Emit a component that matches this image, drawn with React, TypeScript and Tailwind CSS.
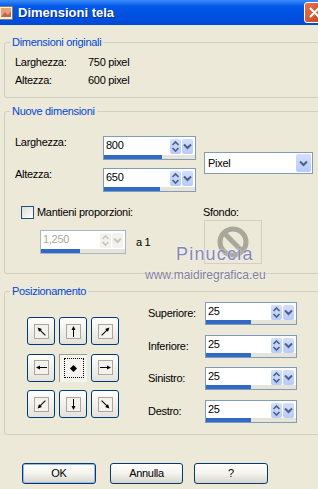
import React from "react";

type Dir = "nw" | "n" | "ne" | "w" | "e" | "sw" | "s" | "se";

const rotation: Record<Dir, string> = {
  nw: "-rotate-45",
  n: "rotate-0",
  ne: "rotate-45",
  w: "-rotate-90",
  e: "rotate-90",
  sw: "-rotate-135",
  s: "rotate-180",
  se: "rotate-135",
};

const Group: React.FC<{ title: string; className: string; children: React.ReactNode }> = ({
  title,
  className,
  children,
}) => (
  <div className={`relative -mr-[12px] rounded-[3px] border border-[#D0D0BF] ${className}`}>
    <span className="absolute -top-[7px] left-[5px] bg-[#ECE9D8] px-[2px] leading-[13px] text-[#0046D5]">
      {title}
    </span>
    {children}
  </div>
);

const SpinBox: React.FC<{ value: string; fill: number; size: string; disabled?: boolean }> = ({
  value,
  fill,
  size,
  disabled,
}) => (
  <div
    className={`flex flex-col border bg-white ${size} ${
      disabled ? "border-[#A7B6C8]" : "border-[#7F9DB9]"
    }`}
  >
    <div className="flex flex-1">
      <span className={`flex-1 pl-[2px] pt-[2px] leading-[13px] ${disabled ? "text-[#ACA899]" : "text-black"}`}>
        {value}
      </span>
      <div className="mr-[2px] mt-[2px] flex h-[15px] gap-[1px]">
        <div
          className={`flex w-[11px] items-center justify-center rounded-[2px] ${
            disabled ? "bg-[#F3F2EC]" : "bg-linear-to-b from-[#D3DFFD] to-[#B7CBF8]"
          }`}
        >
          <svg width="11" height="15" viewBox="0 0 11 15">
            <polyline
              points="2.5,6 5.5,3 8.5,6"
              fill="none"
              stroke={disabled ? "#C9C7BA" : "#4D6185"}
              strokeWidth="1.6"
            />
            <polyline
              points="2.5,9 5.5,12 8.5,9"
              fill="none"
              stroke={disabled ? "#C9C7BA" : "#4D6185"}
              strokeWidth="1.6"
            />
          </svg>
        </div>
        <div
          className={`flex w-[11px] items-center justify-center rounded-[2px] ${
            disabled ? "bg-[#F3F2EC]" : "bg-linear-to-b from-[#D3DFFD] to-[#B7CBF8]"
          }`}
        >
          <svg width="11" height="15" viewBox="0 0 11 15">
            <polyline
              points="2,5.5 5.5,9 9,5.5"
              fill="none"
              stroke={disabled ? "#C9C7BA" : "#4D6185"}
              strokeWidth="2"
            />
          </svg>
        </div>
      </div>
    </div>
    <div className="h-[4px] bg-[#E6E4D9]">
      <div className="h-full bg-[#316AC5]" style={{ width: fill }} />
    </div>
  </div>
);

const PosButton: React.FC<{ dir: Dir }> = ({ dir }) => (
  <div className="flex h-[28px] w-[28px] items-center justify-center rounded-[3px] border border-[#003C74] bg-linear-to-b from-white to-[#E3E2DA]">
    <div className="flex h-[15px] w-[15px] items-center justify-center border border-[#ACA899] bg-[#F3F2EC]">
      <svg width="13" height="13" viewBox="0 0 13 13" className={rotation[dir]}>
        <line x1="6.5" y1="12" x2="6.5" y2="3" stroke="black" strokeWidth="1" />
        <polygon points="6.5,1 4.5,5 8.5,5" fill="black" />
      </svg>
    </div>
  </div>
);

const DlgButton: React.FC<{ label: string; className: string; primary?: boolean }> = ({
  label,
  className,
  primary,
}) => (
  <button
    className={`h-[21px] rounded-[3px] border border-[#003C74] bg-linear-to-b from-white via-[#F4F3EE] to-[#D9D5CA] leading-[13px] text-black ${
      primary ? "shadow-[inset_0_0_0_1px_#9DB8EC]" : ""
    } ${className}`}
  >
    {label}
  </button>
);

const App: React.FC = () => {
  const grid: (Dir | "c")[] = ["nw", "n", "ne", "w", "c", "e", "sw", "s", "se"];
  const margins = [
    { label: "Superiore:", value: "25" },
    { label: "Inferiore:", value: "25" },
    { label: "Sinistro:", value: "25" },
    { label: "Destro:", value: "25" },
  ];

  return (
    <div className="relative h-[489px] w-[318px] overflow-hidden bg-[#ECE9D8] font-['Liberation_Sans',Arial,sans-serif] text-[11px] tracking-[-0.3px] text-black">
      {/* title bar */}
      <div className="flex h-[25px] items-center bg-linear-to-b from-[#3A8CF7] via-[#0058E8] via-25% to-[#0049D6]">
        <svg width="16" height="16" viewBox="0 0 16 16" className="-ml-[2px]">
          <rect x="1.5" y="1.5" width="13" height="13" fill="#F5F0DF" stroke="#8C7B5C" />
          <rect x="3" y="3" width="10" height="9" fill="#E7A27C" />
          <path d="M3 12 L7 7 L10 10 L13 6 L13 12 Z" fill="#B86A4A" />
        </svg>
        <span className="ml-[4px] text-[13px] font-bold tracking-normal text-white [text-shadow:1px_1px_0_#0A2A8A]">
          Dimensioni tela
        </span>
        <div className="-mr-[7px] ml-auto flex h-[21px] w-[21px] items-center justify-center rounded-[3px] border border-white bg-linear-to-br from-[#E8744E] to-[#C7401E]">
          <svg width="13" height="13" viewBox="0 0 13 13">
            <path d="M2 2 L11 11 M11 2 L2 11" stroke="white" strokeWidth="2.2" />
          </svg>
        </div>
      </div>

      <div className="pl-[4px]">
        {/* original size */}
        <Group title="Dimensioni originali" className="mt-[17px] h-[56px] pl-[10px] pt-[13px]">
          <div className="flex flex-col gap-[5px] leading-[13px]">
            <div className="flex">
              <span className="w-[73px]">Larghezza:</span>
              <span>750 pixel</span>
            </div>
            <div className="flex">
              <span className="w-[73px]">Altezza:</span>
              <span>600 pixel</span>
            </div>
          </div>
        </Group>

        {/* new size */}
        <Group title="Nuove dimensioni" className="mt-[13px] h-[163px] pl-[10px] pt-[24px]">
          <div className="flex">
            <div className="flex flex-col gap-[8px]">
              <div className="flex">
                <span className="w-[88px] leading-[13px]">Larghezza:</span>
                <SpinBox value="800" fill={58} size="h-[24px] w-[93px]" />
              </div>
              <div className="flex">
                <span className="w-[88px] leading-[13px]">Altezza:</span>
                <SpinBox value="650" fill={56} size="h-[24px] w-[93px]" />
              </div>
            </div>
            <div className="ml-[8px] mt-[16px] flex h-[22px] w-[109px] items-center border border-[#7F9DB9] bg-white">
              <span className="flex-1 pl-[3px] leading-[13px]">Pixel</span>
              <div className="mr-[1px] flex h-[18px] w-[15px] items-center justify-center rounded-[2px] bg-linear-to-b from-[#D3DFFD] to-[#B7CBF8]">
                <svg width="11" height="11" viewBox="0 0 11 11">
                  <polyline points="2,3.5 5.5,7 9,3.5" fill="none" stroke="#4D6185" strokeWidth="2" />
                </svg>
              </div>
            </div>
          </div>

          <div className="mt-[14px] flex">
            <div className="flex w-[188px] flex-col">
              <div className="flex h-[13px] items-center">
                <div className="ml-[6px] h-[13px] w-[13px] border border-[#1C5180] bg-linear-to-br from-[#DCDCD7] to-white" />
                <span className="ml-[3px] leading-[13px]">Mantieni proporzioni:</span>
              </div>
              <div className="mt-[11px] flex items-center">
                <div className="ml-[25px]">
                  <SpinBox value="1,250" fill={39} size="h-[24px] w-[86px]" disabled />
                </div>
                <span className="ml-[10px] leading-[13px]">a 1</span>
              </div>
            </div>
            <div className="flex flex-col">
              <span className="leading-[13px]">Sfondo:</span>
              <div className="ml-[1px] mt-[1px] flex h-[44px] w-[58px] items-center justify-center border border-[#D2CFC3] bg-[#ECE9D8]">
                <svg width="34" height="34" viewBox="0 0 34 34">
                  <circle cx="17" cy="17" r="13" fill="none" stroke="#A9A79C" strokeWidth="5" />
                  <line x1="8" y1="8" x2="26" y2="26" stroke="#A9A79C" strokeWidth="5" />
                </svg>
              </div>
            </div>
          </div>
        </Group>

        {/* positioning */}
        <Group title="Posizionamento" className="mt-[17px] h-[144px] pl-[22px] pt-[10px]">
          <div className="flex">
            <div className="mt-[15px] grid grid-cols-[28px_28px_28px] gap-[4px]">
              {grid.map((d) =>
                d === "c" ? (
                  <div
                    key={d}
                    className="flex h-[28px] w-[28px] items-center justify-center border-l border-t border-[#9E9B8D] bg-[#F4F3EE]"
                  >
                    <div className="flex h-[20px] w-[20px] items-center justify-center border border-dotted border-black">
                      <div className="h-[5px] w-[5px] rotate-45 bg-black" />
                    </div>
                  </div>
                ) : (
                  <PosButton key={d} dir={d} />
                )
              )}
            </div>
            <div className="ml-[29px] flex flex-col gap-[9.5px]">
              {margins.map((m) => (
                <div key={m.label} className="flex items-center">
                  <span className="w-[57px] leading-[13px]">{m.label}</span>
                  <SpinBox value={m.value} fill={45} size="h-[23px] w-[92px]" />
                </div>
              ))}
            </div>
          </div>
        </Group>

        {/* buttons */}
        <div className="mt-[28px] flex pl-[18px]">
          <DlgButton label="OK" className="w-[74px]" primary />
          <DlgButton label="Annulla" className="ml-[14px] w-[73px]" />
          <DlgButton label="?" className="ml-[11px] w-[74px]" />
        </div>
      </div>

      {/* watermark */}
      <span className="absolute left-[176px] top-[243px] text-[18px] leading-[22px] tracking-[1.2px] text-[#8587BE] [text-shadow:0_0_2px_white]">
        Pinuccia
      </span>
      <span className="absolute left-[145px] top-[268px] text-[12px] leading-[14px] tracking-normal text-[#7F7F9A] [text-shadow:0_0_2px_white]">
        www.maidiregrafica.eu
      </span>
    </div>
  );
};

export default App;
